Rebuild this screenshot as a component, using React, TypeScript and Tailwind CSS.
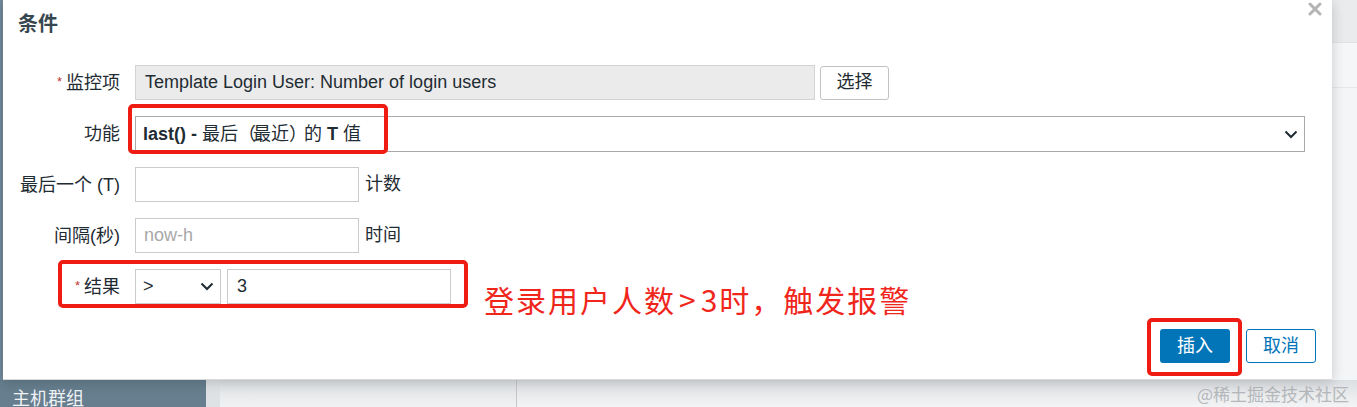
import React from "react";

const font = { fontFamily: '"Liberation Sans", Arial, "Noto Sans CJK SC", sans-serif' };

function Chevron({ className = "" }: { className?: string }) {
  return (
    <svg className={className} width="14" height="9" viewBox="0 0 14 9">
      <polyline points="1.5,1.5 7,7 12.5,1.5" fill="none" stroke="#1f2c33" strokeWidth="2" />
    </svg>
  );
}

function Label({ children, req }: { children: React.ReactNode; req?: boolean }) {
  return (
    <div className="w-[102px] shrink-0 text-right text-[18px] text-[#1f2c33] leading-none whitespace-nowrap">
      {req && <span className="text-[#c0392b] text-[13px] align-top mr-[4px] relative top-[1px]">*</span>}
      {children}
    </div>
  );
}

export default function App() {
  return (
    <div className="relative w-[1357px] h-[407px] overflow-hidden bg-[#f3f4f5]" style={font}>
      {/* background page */}
      <div className="absolute left-0 top-0 w-[4px] h-[380px] bg-[#72899a]" />
      <div className="absolute right-0 top-0 w-[25px] h-[380px] flex flex-col">
        <div className="h-[43px] bg-[#e9ebec] border-b border-[#e0e2e4]" />
        <div className="h-[45px] bg-[#f5f6f7] border-b border-[#e6e8e9]" />
        <div className="flex-1 bg-[#f4f5f6]" />
      </div>
      <div className="absolute left-0 top-[380px] w-full h-[27px] flex">
        <div className="w-[206px] bg-[#667e8e] text-[#f0f3f5] text-[18px] pl-[12px] pt-[10px] leading-none">主机群组</div>
        <div className="w-[14px] bg-[#dfe2e4]" />
        <div className="w-[297px] bg-gradient-to-b from-[#dcdfe2] to-[#f1f2f3] border-r border-[#c4c6c8]" />
        <div className="flex-1 bg-gradient-to-b from-[#dcdfe2] to-[#f3f4f5]" />
      </div>
      <div className="absolute right-[8px] top-[385px] text-[17px] text-[#b5b8bb] leading-none" style={{ fontFamily: '"Noto Sans CJK SC", sans-serif' }}>
        @稀土掘金技术社区
      </div>

      {/* dialog */}
      <div className="absolute left-[3px] top-0 w-[1329px] h-[380px] bg-white border-b border-[#d8dadc] shadow-[0_2px_12px_rgba(0,0,0,0.18)] flex flex-col">
        <div className="absolute right-[10px] top-[2px]">
          <svg width="14" height="14" viewBox="0 0 14 14">
            <path d="M2 2 L12 12 M12 2 L2 12" stroke="#b4b4b4" strokeWidth="3" strokeLinecap="round" />
          </svg>
        </div>
        <div className="pl-[15px] pt-[12px] text-[20px] font-bold text-[#37474f] leading-[24px]">条件</div>

        <div className="mt-[29px] flex flex-col pl-[15px]">
          {/* row 1 */}
          <div className="flex items-center h-[35px]">
            <Label req>监控项</Label>
            <div className="ml-[15px] w-[680px] h-[35px] bg-[#ebebeb] border border-[#d3d3d3] flex items-center pl-[9px] text-[18px] text-[#1f2c33]">
              Template Login User: Number of login users
            </div>
            <div className="ml-[5px] w-[69px] h-[34px] border border-[#c2c2c2] rounded-[3px] bg-white flex items-center justify-center text-[18px] text-[#1f2c33]">
              选择
            </div>
          </div>
          {/* row 2 */}
          <div className="flex items-center h-[36px] mt-[16px]">
            <Label>功能</Label>
            <div className="ml-[15px] w-[1170px] h-[36px] border border-[#aaaaaa] flex items-center justify-between pl-[7px] pr-[6px] text-[18px] text-[#1f2c33]">
              <span className="whitespace-nowrap">
                <span className="font-bold">last() -</span> 最后<span className="tracking-[-3px]">（</span>最近<span className="tracking-[-3px]">）</span>的 <span className="font-bold">T</span> 值
              </span>
              <Chevron />
            </div>
          </div>
          {/* row 3 */}
          <div className="flex items-center h-[35px] mt-[15px]">
            <Label>最后一个 (T)</Label>
            <div className="ml-[15px] w-[224px] h-[35px] border border-[#cbcbcb]" />
            <span className="ml-[6px] text-[18px] text-[#1f2c33]">计数</span>
          </div>
          {/* row 4 */}
          <div className="flex items-center h-[35px] mt-[16px]">
            <Label>间隔(秒)</Label>
            <div className="ml-[15px] w-[224px] h-[35px] border border-[#cbcbcb] flex items-center pl-[8px] text-[18px] text-[#a8a8a8]">
              now-h
            </div>
            <span className="ml-[6px] text-[18px] text-[#1f2c33]">时间</span>
          </div>
          {/* row 5 */}
          <div className="flex items-center h-[35px] mt-[16px]">
            <Label req>结果</Label>
            <div className="ml-[15px] w-[86px] h-[35px] border border-[#cbcbcb] flex items-center justify-between pl-[7px] pr-[6px] text-[18px] text-[#1f2c33]">
              <span>&gt;</span>
              <Chevron />
            </div>
            <div className="ml-[6px] w-[224px] h-[35px] border border-[#cbcbcb] flex items-center pl-[9px] text-[18px] text-[#1f2c33]">
              3
            </div>
          </div>
        </div>

        <div className="mt-[25px] flex justify-end pr-[16px] gap-[16px]">
          <div className="w-[70px] h-[34px] rounded-[3px] bg-[#0275b8] text-white text-[18px] flex items-center justify-center">插入</div>
          <div className="w-[70px] h-[34px] rounded-[3px] border border-[#0275b8] bg-white text-[#0275b8] text-[18px] flex items-center justify-center">取消</div>
        </div>
      </div>

      {/* annotations */}
      <div className="absolute left-[128px] top-[104px] w-[260px] h-[50px] border-[4px] border-[#ee1c12] rounded-[5px]" />
      <div className="absolute left-[58px] top-[260px] w-[410px] h-[48px] border-[4px] border-[#ee1c12] rounded-[5px]" />
      <div className="absolute left-[1147px] top-[318px] w-[95px] h-[58px] border-[4px] border-[#ee1c12] rounded-[5px]" />
      <div className="absolute left-[484px] top-[280px] text-[30px] leading-[38px] tracking-[2px] text-[#f0261c] whitespace-nowrap" style={{ fontFamily: '"Noto Sans CJK SC", sans-serif' }}>
        登录用户人数<span className="mx-[3px]">&gt;</span>3时，触发报警
      </div>
    </div>
  );
}
